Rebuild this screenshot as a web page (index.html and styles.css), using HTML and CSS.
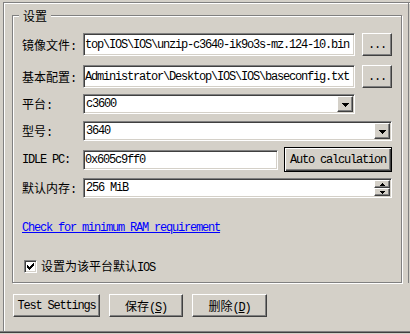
FILE: index.html
```html
<!DOCTYPE html>
<html lang="zh-CN">
<head>
    <meta charset="UTF-8">
    <title>设置</title>
    <link rel="stylesheet" href="styles.css">
</head>
<body>
    <div class="window">
        <div class="upper">
            <fieldset class="group">
                <legend>设置</legend>

                <div class="row row-file">
                    <label class="lbl" for="image-file">镜像文件:</label>
                    <input type="text" id="image-file" class="field field-path" value="top\IOS\IOS\unzip-c3640-ik9o3s-mz.124-10.bin">
                    <button type="button" class="btn btn-browse en">...</button>
                </div>

                <div class="row row-config">
                    <label class="lbl" for="base-config">基本配置:</label>
                    <input type="text" id="base-config" class="field field-path" value="Administrator\Desktop\IOS\IOS\baseconfig.txt">
                    <button type="button" class="btn btn-browse en">...</button>
                </div>

                <div class="row row-platform">
                    <span class="lbl">平台:</span>
                    <div class="combo combo-short">
                        <span class="combo-value en">c3600</span>
                        <span class="arrow-btn">
                            <svg width="7" height="4" viewBox="0 0 7 4" shape-rendering="crispEdges"><rect x="0" y="0" width="7" height="1"/><rect x="1" y="1" width="5" height="1"/><rect x="2" y="2" width="3" height="1"/><rect x="3" y="3" width="1" height="1"/></svg>
                        </span>
                    </div>
                </div>

                <div class="row row-model">
                    <span class="lbl">型号:</span>
                    <div class="combo">
                        <span class="combo-value en">3640</span>
                        <span class="arrow-btn">
                            <svg width="7" height="4" viewBox="0 0 7 4" shape-rendering="crispEdges"><rect x="0" y="0" width="7" height="1"/><rect x="1" y="1" width="5" height="1"/><rect x="2" y="2" width="3" height="1"/><rect x="3" y="3" width="1" height="1"/></svg>
                        </span>
                    </div>
                </div>

                <div class="row row-idle">
                    <label class="lbl en" for="idle-pc">IDLE PC:</label>
                    <input type="text" id="idle-pc" class="field field-idle" value="0x605c9ff0">
                    <button type="button" class="btn btn-default en">Auto calculation</button>
                </div>

                <div class="row row-ram">
                    <span class="lbl">默认内存:</span>
                    <div class="spin">
                        <span class="spin-value en">256 MiB</span>
                        <span class="spin-btns">
                            <span class="spin-btn">
                                <svg width="5" height="3" viewBox="0 0 5 3" shape-rendering="crispEdges"><rect x="2" y="0" width="1" height="1"/><rect x="1" y="1" width="3" height="1"/><rect x="0" y="2" width="5" height="1"/></svg>
                            </span>
                            <span class="spin-btn">
                                <svg width="5" height="3" viewBox="0 0 5 3" shape-rendering="crispEdges"><rect x="0" y="0" width="5" height="1"/><rect x="1" y="1" width="3" height="1"/><rect x="2" y="2" width="1" height="1"/></svg>
                            </span>
                        </span>
                    </div>
                </div>

                <div class="link-row">
                    <a href="#" class="link en">Check for minimum RAM requirement</a>
                </div>

                <div class="check-row">
                    <span class="check">
                        <svg width="7" height="7" viewBox="0 0 7 7" shape-rendering="crispEdges"><path d="M6 0h1v1h-1zM5 1h2v1h-2zM0 2h1v1h-1zM4 2h3v1h-3zM0 3h2v1h-2zM3 3h3v1h-3zM0 4h5v1h-5zM1 5h3v1h-3zM2 6h1v1h-1z"/></svg>
                    </span>
                    <span class="check-label">设置为该平台默认<span class="en-tight">IOS</span></span>
                </div>
            </fieldset>
        </div>

        <div class="actions">
            <button type="button" class="btn btn-test en">Test Settings</button>
            <button type="button" class="btn btn-save"><span class="cjk">保存</span><span class="en">(<u>S</u>)</span></button>
            <button type="button" class="btn btn-delete"><span class="cjk">删除</span><span class="en">(<u>D</u>)</span></button>
        </div>
    </div>
    <div class="bottom-edge"></div>
</body>
</html>
```

FILE: styles.css
```css
body {
    margin: 0;
    width: 410px;
    height: 334px;
    overflow: hidden;
    background-color: #d4d0c8;
    font-family: "Liberation Mono", "Noto Sans CJK SC", monospace;
    font-size: 12px;
    color: #000000;
}

/* latin text, SimSun-like 6px cells */
.en {
    font-family: "Liberation Mono", monospace;
    font-size: 12px;
    letter-spacing: -1.2px;
}

.cjk {
    font-family: "Noto Sans CJK SC", sans-serif;
    font-size: 12px;
}

.window {
    margin: 2px 0 0 3px;
    height: 328px;
    border-top: 1px solid #808080;
    border-left: 1px solid #808080;
    box-shadow: inset 1px 1px #ffffff;
}

.upper {
    box-sizing: border-box;
    width: 405px;
    height: 280px;
    padding: 5px 0 0 8px;
    border-right: 1px solid #808080;
}

.group {
    box-sizing: border-box;
    width: 390px;
    height: 275px;
    margin: 0;
    padding: 10px 9px 0 9px;
    border: 1px solid #808080;
    box-shadow: inset 1px 1px #ffffff, 1px 1px #ffffff;
}

.group legend {
    margin-left: -3px;
    padding: 0 4px;
    line-height: 15px;
    height: 15px;
    font-family: "Noto Sans CJK SC", sans-serif;
    font-size: 12px;
    background-color: #d4d0c8;
}

.row {
    display: flex;
    align-items: center;
}

.lbl {
    flex: none;
    width: 61px;
    white-space: nowrap;
}

.row-file {
    height: 23px;
}

.row-config {
    height: 23px;
    margin-top: 9px;
}

.row-platform {
    height: 20px;
    margin-top: 6px;
}

.row-model {
    height: 20px;
    margin-top: 7px;
}

.row-idle {
    height: 25px;
    margin-top: 6px;
}

.row-ram {
    height: 20px;
    margin-top: 6px;
}

/* sunken edit box */
.field {
    box-sizing: border-box;
    height: 20px;
    margin: 0;
    padding: 0 0 0 1px;
    border: 1px solid;
    border-color: #808080 #ffffff #ffffff #808080;
    box-shadow: inset 1px 1px #404040, inset -1px -1px #d4d0c8;
    background-color: #ffffff;
    color: #000000;
    font-family: "Liberation Mono", monospace;
    font-size: 12px;
    letter-spacing: -1.2px;
    outline: none;
}

.field-path {
    width: 272px;
    height: 23px;
}

.field-idle {
    width: 195px;
}

/* raised push button */
.btn {
    box-sizing: border-box;
    height: 23px;
    margin: 0;
    padding: 0;
    border: 1px solid;
    border-color: #ffffff #404040 #404040 #ffffff;
    box-shadow: inset -1px -1px #808080;
    background-color: #d4d0c8;
    color: #000000;
    white-space: nowrap;
}

.btn-browse {
    width: 30px;
    margin-left: 7px;
}

.btn-default {
    width: 108px;
    height: 25px;
    margin-left: 6px;
    border-color: #000000;
    box-shadow: inset 1px 1px #ffffff, inset -1px -1px #404040, inset -2px -2px #808080;
}

.combo, .spin {
    box-sizing: border-box;
    display: flex;
    align-items: center;
    width: 309px;
    height: 20px;
    border: 1px solid;
    border-color: #808080 #ffffff #ffffff #808080;
    box-shadow: inset 1px 1px #404040, inset -1px -1px #d4d0c8;
    background-color: #ffffff;
}

.combo-short {
    width: 272px;
}

.combo-value, .spin-value {
    flex: 1;
    padding-left: 2px;
}

.arrow-btn {
    box-sizing: border-box;
    display: flex;
    align-items: center;
    justify-content: center;
    width: 16px;
    height: 16px;
    margin-right: 1px;
    padding-top: 1px;
    border: 1px solid;
    border-color: #ffffff #404040 #404040 #ffffff;
    box-shadow: inset -1px -1px #808080;
    background-color: #d4d0c8;
}

.spin-btns {
    display: flex;
    flex-direction: column;
    margin-right: 1px;
}

.spin-btn {
    box-sizing: border-box;
    display: flex;
    align-items: center;
    justify-content: center;
    width: 16px;
    height: 8px;
    border: 1px solid;
    border-color: #ffffff #404040 #404040 #ffffff;
    box-shadow: inset -1px -1px #808080;
    background-color: #d4d0c8;
}

.link-row {
    margin-top: 23px;
    height: 14px;
    line-height: 14px;
}

.link {
    color: #0000ff;
    text-decoration: underline;
}

.check-row {
    display: flex;
    align-items: center;
    height: 14px;
    margin-top: 24px;
}

.check {
    box-sizing: border-box;
    display: flex;
    align-items: center;
    justify-content: center;
    width: 13px;
    height: 13px;
    margin-left: 2px;
    border: 1px solid;
    border-color: #808080 #ffffff #ffffff #808080;
    box-shadow: inset 1px 1px #404040, inset -1px -1px #d4d0c8;
    background-color: #ffffff;
}

.check-label {
    margin-left: 4px;
    font-family: "Noto Sans CJK SC", sans-serif;
    font-size: 12px;
}

.en-tight {
    font-family: "Liberation Mono", monospace;
    font-size: 12px;
    letter-spacing: -1.2px;
}

.actions {
    display: flex;
    gap: 9px;
    padding-left: 9px;
    margin-top: 11px;
}

.btn-test {
    width: 87px;
}

.btn-save {
    width: 74px;
}

.btn-delete {
    width: 75px;
}

.bottom-edge {
    height: 1px;
    border-top: 1px solid #808080;
    background-color: #404040;
}
```
